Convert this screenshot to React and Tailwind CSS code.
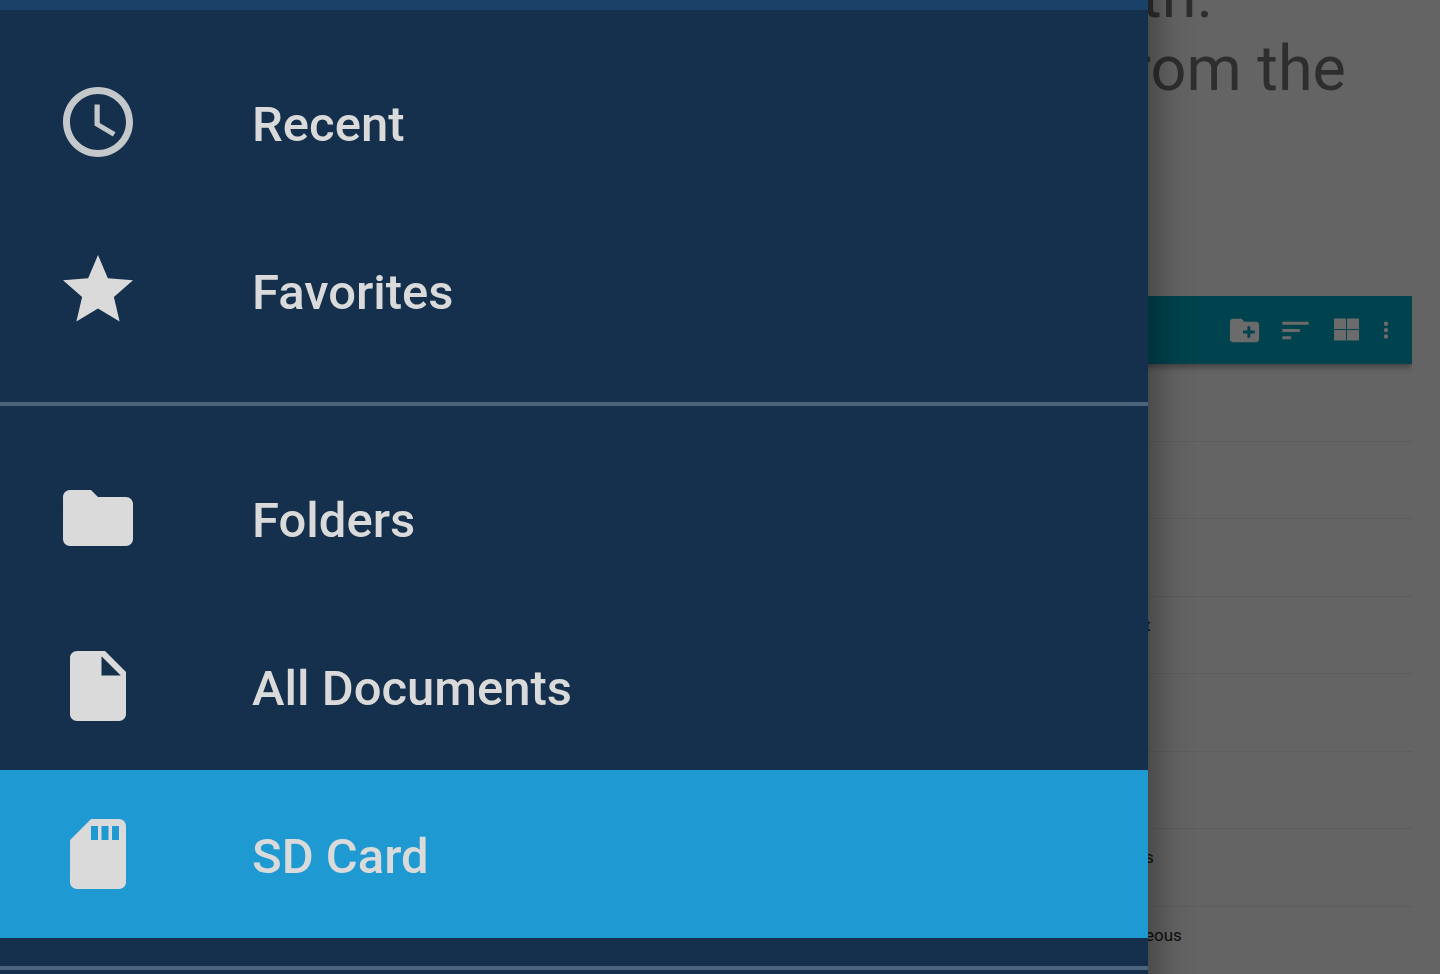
const primaryItems = [
  {
    label: "Recent",
    iconClass: "text-[#c4c8cb]",
    path: "M11.99 2C6.47 2 2 6.48 2 12s4.47 10 9.99 10C17.52 22 22 17.52 22 12S17.52 2 11.99 2zM12 20c-4.42 0-8-3.58-8-8s3.58-8 8-8 8 3.58 8 8-3.58 8-8 8zM12.5 7H11v6l5.25 3.15.75-1.23-4.5-2.67z",
  },
  {
    label: "Favorites",
    path: "M12 17.27L18.18 21l-1.64-7.03L22 9.24l-7.19-.61L12 2 9.19 8.63 2 9.24l5.46 4.73L5.82 21z",
  },
];

const storageItems = [
  {
    label: "Folders",
    path: "M10 4H4c-1.1 0-1.99.9-1.99 2L2 18c0 1.1.9 2 2 2h16c1.1 0 2-.9 2-2V8c0-1.1-.9-2-2-2h-8l-2-2z",
  },
  {
    label: "All Documents",
    path: "M13 9V3.5L18.5 9M6 2c-1.11 0-2 .89-2 2v16c0 1.1.9 2 2 2h12c1.1 0 2-.9 2-2V8l-6-6H6z",
  },
  {
    label: "SD Card",
    active: true,
    path: "M18 2h-8L4.02 8 4 20c0 1.1.9 2 2 2h12c1.1 0 2-.9 2-2V4c0-1.1-.9-2-2-2zm-6 6h-2V4h2v4zm3 0h-2V4h2v4zm3 0h-2V4h2v4z",
  },
];

const rows = ["", "", "", "t", "", "", "s", "eous"];

function NavItem({ label, path, iconClass = "", active = false }) {
  return (
    <li>
      <a
        href="#"
        aria-current={active ? "page" : undefined}
        className={`flex h-[168px] items-center gap-28 px-14 text-[49px] leading-none font-medium text-[#dadada] ${active ? "bg-[#1f99d1]" : ""}`}
      >
        <svg viewBox="0 0 24 24" fill="currentColor" fillRule="evenodd" className={`size-[84px] shrink-0 ${iconClass}`} aria-hidden="true">
          <path d={path} />
        </svg>
        <span className="pt-1">{label}</span>
      </a>
    </li>
  );
}

function NavGroup({ items }) {
  return (
    <ul className="border-b-4 border-[#4c657c] py-7">
      {items.map((item) => (
        <NavItem key={item.label} {...item} />
      ))}
    </ul>
  );
}

function Toolbar() {
  return (
    <div className="relative flex h-[68px] items-center justify-end gap-4 bg-[#00424d] pr-5 text-[#6b6b6b] shadow-[0_3px_6px_rgba(0,0,0,0.35)]">
      <button aria-label="New folder">
        <svg viewBox="0 0 24 24" fill="currentColor" className="size-[35px]">
          <path d="M20 6h-8l-2-2H4c-1.11 0-1.99.89-1.99 2L2 18c0 1.11.89 2 2 2h16c1.11 0 2-.89 2-2V8c0-1.11-.89-2-2-2zm-1 8h-3v3h-2v-3h-3v-2h3V9h2v3h3v2z" />
        </svg>
      </button>
      <button aria-label="Sort">
        <svg viewBox="0 0 24 24" fill="currentColor" className="size-[35px]">
          <path d="M3 18h6v-2H3v2zM3 6v2h18V6H3zm0 7h12v-2H3v2z" />
        </svg>
      </button>
      <button aria-label="Grid view">
        <svg viewBox="0 0 35 35" fill="currentColor" className="size-[35px]">
          <path d="M5 5.500h12v10.500H5zM18 5.500h12v10.500H18zM5 17h12v10.500H5zM18 17h12v10.500H18z" />
        </svg>
      </button>
      <button aria-label="More options">
        <svg viewBox="0 0 12 35" fill="currentColor" className="h-[35px] w-3">
          <circle cx="6" cy="10.800" r="2.200" />
          <circle cx="6" cy="17.100" r="2.200" />
          <circle cx="6" cy="23.500" r="2.200" />
        </svg>
      </button>
    </div>
  );
}

export default function App() {
  return (
    <div className="relative h-screen overflow-hidden bg-[#646464] font-[Roboto,sans-serif]">
      <main>
        <div className="h-[296px] overflow-hidden text-right text-[63px] text-[#2e2e2e]">
          <p className="-mt-10 pr-[227px] leading-[72px]">th.</p>
          <p className="pr-[94px] leading-[74px]">from the</p>
        </div>
        <section className="mr-7 overflow-hidden">
          <Toolbar />
          <ul className="grid h-[620px] grid-rows-8 text-[17px] leading-5 text-[#0c0c0c]">
            {rows.map((name, i) => (
              <li key={i} className="border-b border-[#5d5d5d] pt-[18px] pl-[1145px]">
                {name}
              </li>
            ))}
          </ul>
        </section>
      </main>

      <div className="absolute inset-y-0 right-0 w-[292px] bg-linear-to-r from-black/25 via-black/5 via-9% to-transparent to-18%" />

      <nav aria-label="Storage" className="absolute inset-y-0 right-[292px] left-0 overflow-hidden bg-[#14304d]">
        <div className="h-2.5 bg-[#1a4167]" />
        <NavGroup items={primaryItems} />
        <NavGroup items={storageItems} />
      </nav>
    </div>
  );
}
